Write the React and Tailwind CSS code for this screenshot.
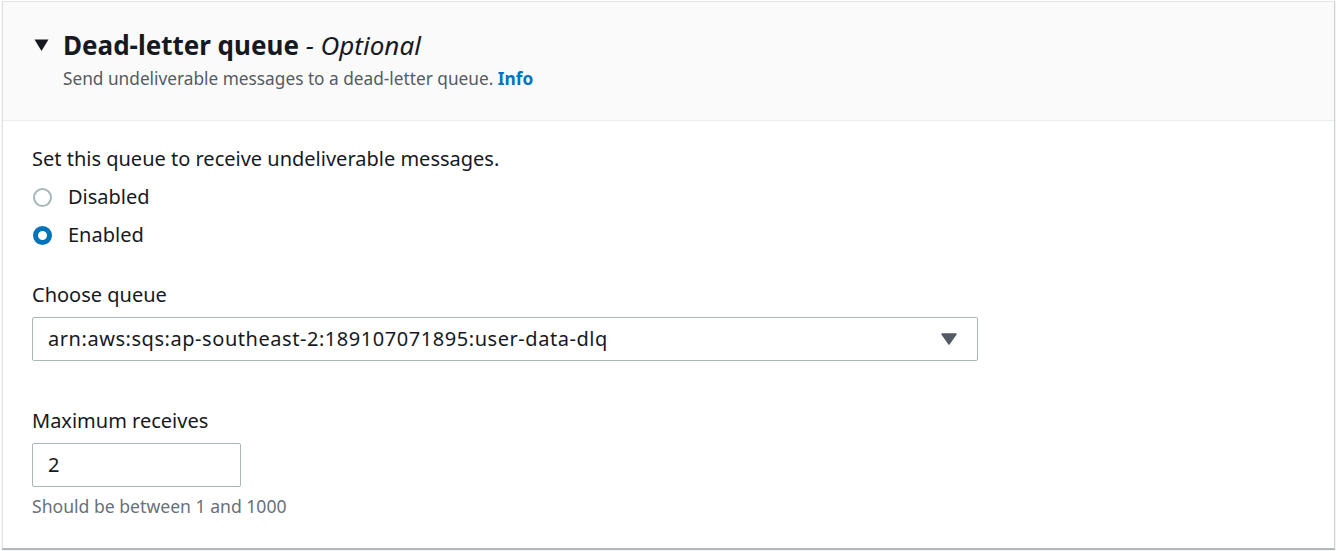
export default function App() {
  return (
    <div className="bg-white w-[1337px] h-[551px] pt-px pl-[2px] pr-[2px]" style={{ fontFamily: '"Noto Sans", "Open Sans", sans-serif' }}>
      <div className="h-[548px] border border-[#e3e3e3] border-b-[#b4b8b8] border-r-[#cfd2d2] shadow-[0_1px_1px_rgba(0,22,43,0.3)] flex flex-col">
        <div className="h-[119px] bg-[#fafafa] border-b border-[#eaeded] pl-[31px] pt-[25px]">
          <div className="flex items-center">
            <svg width="15" height="14" viewBox="0 0 15 14" className="mr-[14px]">
              <path d="M0.5 1.5 L14.5 1.5 L7.5 13 Z" fill="#16191f" />
            </svg>
            <h2 className="text-[26px] leading-[36px] font-bold text-[#16191f]">
              Dead-letter queue <span className="font-normal italic">- Optional</span>
            </h2>
          </div>
          <p className="ml-[29px] mt-[4px] text-[17.25px] leading-[24px] text-[#545b64]">
            Send undeliverable messages to a dead-letter queue.{" "}
            <a className="font-bold text-[#0073bb]">Info</a>
          </p>
        </div>
        <div className="pl-[29px] pt-[25px] text-[#16191f]">
          <div className="text-[20px] leading-[26px]">Set this queue to receive undeliverable messages.</div>
          <div className="flex flex-col gap-[12px] mt-[12px]">
            <label className="flex items-center h-[26px]">
              <span className="w-[19px] h-[19px] rounded-full border-2 border-[#aab7b8] bg-white ml-px mr-[16px]" />
              <span className="text-[20px]">Disabled</span>
            </label>
            <label className="flex items-center h-[26px]">
              <span className="w-[19px] h-[19px] rounded-full border-[5px] border-[#0073bb] bg-white ml-px mr-[16px]" />
              <span className="text-[20px]">Enabled</span>
            </label>
          </div>
          <div className="mt-[34px] text-[20px] leading-[26px]">Choose queue</div>
          <div className="mt-[9px] w-[946px] h-[44px] border border-[#aab7b8] rounded-[2px] flex items-center justify-between pl-[15px] pr-[20px]">
            <span className="text-[20px] tracking-[0.55px]">arn:aws:sqs:ap-southeast-2:189107071895:user-data-dlq</span>
            <svg width="16" height="12" viewBox="0 0 16 12">
              <path d="M1 1 L15 1 L8 11 Z" fill="#545b64" stroke="#545b64" strokeWidth="1.5" strokeLinejoin="round" />
            </svg>
          </div>
          <div className="mt-[47px] text-[20px] leading-[26px]">Maximum receives</div>
          <div className="mt-[9px] w-[209px] h-[44px] border border-[#aab7b8] rounded-[2px] flex items-center pl-[15px]">
            <span className="text-[20px]">2</span>
          </div>
          <div className="mt-[7px] text-[17.6px] leading-[24px] text-[#687078]">Should be between 1 and 1000</div>
        </div>
      </div>
    </div>
  );
}
